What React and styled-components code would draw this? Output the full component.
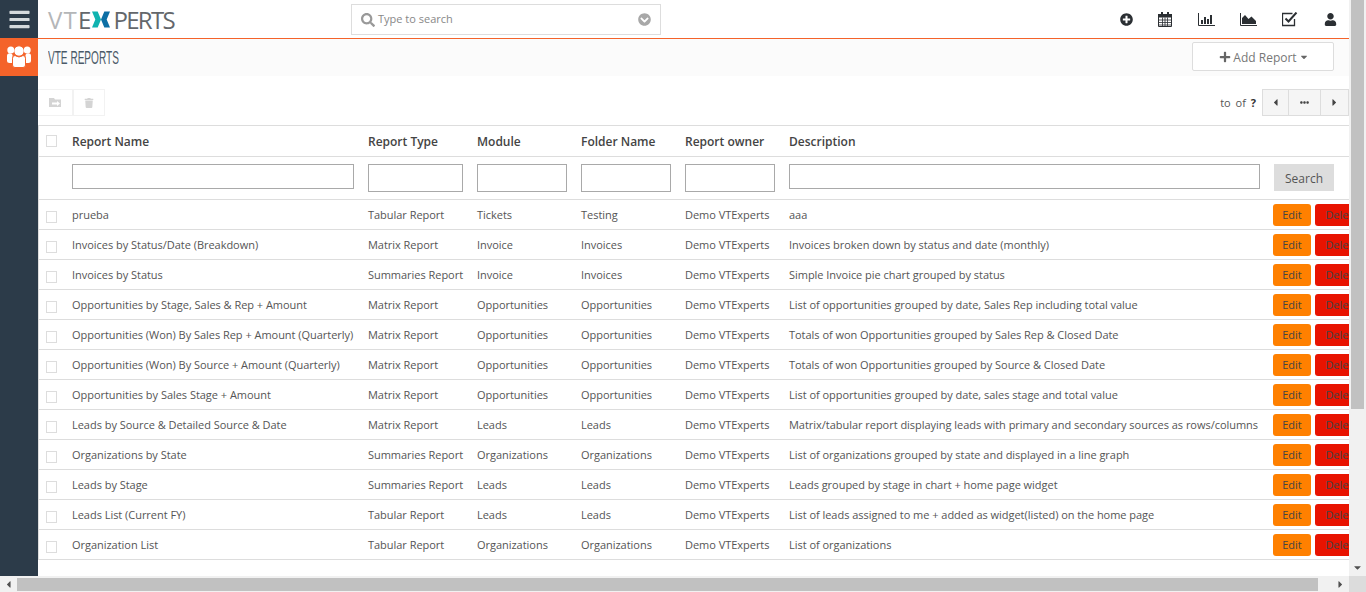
import React from "react";
import styled, { createGlobalStyle } from "styled-components";
import { FaBars, FaSearch, FaChevronCircleDown, FaPlusCircle, FaUser, FaPlus, FaCaretDown, FaCaretLeft, FaCaretRight, FaEllipsisH, FaTrash } from "react-icons/fa";

const Global = createGlobalStyle`
  * { box-sizing: border-box; }
  html, body { margin: 0; padding: 0; height: 100%; overflow: hidden; background: #fff; }
  body { font-family: "Open Sans", "Liberation Sans", sans-serif; font-size: 11px; color: #555; }
`;

const Shell = styled.div`
  display: grid;
  grid-template-columns: 1349px 17px;
  grid-template-rows: 576px 16px;
  width: 1366px;
  height: 592px;
`;
const Viewport = styled.div`
  display: flex;
  overflow: hidden;
  min-width: 0;
`;
const Sidebar = styled.nav`
  flex: 0 0 38px;
  background: #2c3b49;
  display: flex;
  flex-direction: column;
`;
const MenuButton = styled.div`
  height: 38px;
  display: flex;
  align-items: center;
  justify-content: center;
  color: #d5dadd;
  font-size: 23px;
`;
const ModuleTile = styled.div`
  height: 38px;
  background: #f4632a;
  display: flex;
  align-items: center;
  justify-content: center;
  padding-bottom: 1px;
`;
const Main = styled.main`
  flex: 1;
  min-width: 0;
  display: flex;
  flex-direction: column;
`;
const TopBar = styled.header`
  height: 39px;
  flex: none;
  border-bottom: 1px solid #f4632a;
  display: flex;
  align-items: flex-start;
  padding-left: 10px;
`;
const Logo = styled.div`
  width: 303px;
  height: 38px;
  display: flex;
  align-items: center;
  font-family: "Open Sans", sans-serif;
  font-weight: 400;
  font-size: 24px;
  letter-spacing: -1.7px;
  color: #63676b;
  svg { margin: 0 3px 0 0; }
`;
const LogoLead = styled.span`
  letter-spacing: 1.2px;
`;
const LogoFade = styled.span`
  color: #b4b6b8;
`;
const SearchBox = styled.div`
  width: 310px;
  height: 31px;
  margin-top: 4px;
  border: 1px solid #ddd;
  display: flex;
  align-items: center;
  padding: 0 9px;
  color: #999;
  font-size: 14px;
`;
const SearchText = styled.span`
  flex: 1;
  margin: -2px 0 0 3px;
  font-size: 11px;
  color: #888;
`;
const TopIcons = styled.div`
  margin-left: auto;
  display: flex;
  align-items: center;
  height: 38px;
  padding-top: 1px;
  color: #2b2f33;
  font-size: 14px;
`;
const TopIcon = styled.span`
  width: ${(p) => p.$w}px;
  display: flex;
  justify-content: center;
`;
const ModuleHeader = styled.div`
  height: 37px;
  flex: none;
  background: #fbfbfb;
  display: flex;
  align-items: center;
  justify-content: space-between;
  padding: 0 15px 2px 10px;
`;
const ModuleTitle = styled.h1`
  margin: 2px 0 0;
  font-family: "Liberation Sans", sans-serif;
  font-weight: 400;
  font-size: 19px;
  color: #4b5a68;
  display: inline-block;
  white-space: nowrap;
  transform-origin: left center;
  transform: scaleX(0.53);
`;
const AddButton = styled.button`
  width: 142px;
  height: 29px;
  background: #fff;
  border: 1px solid #ddd;
  border-radius: 2px;
  display: flex;
  align-items: center;
  justify-content: center;
  gap: 2px;
  color: #777;
  font: 400 12px "Open Sans", sans-serif;
  padding: 1px 0 0 2px;
  svg { color: #666; }
`;
const Toolbar = styled.div`
  height: 49px;
  flex: none;
  display: flex;
  align-items: flex-start;
  justify-content: space-between;
  padding-top: 13px;
`;
const BulkGroup = styled.div`
  display: flex;
`;
const BulkButton = styled.div`
  width: ${(p) => p.$w}px;
  height: 27px;
  border: 1px solid #f2f2f2;
  border-left-width: ${(p) => (p.$first ? 0 : 1)}px;
  display: flex;
  align-items: center;
  justify-content: center;
  color: #d4d4d4;
  font-size: 11px;
`;
const Pager = styled.div`
  display: flex;
  align-items: center;
`;
const PagerText = styled.span`
  margin-right: 6px;
  word-spacing: 2px;
  b { color: #333; font-weight: 700; }
`;
const PagerButton = styled.div`
  width: ${(p) => p.$w}px;
  height: 27px;
  background: #f5f5f5;
  border: 1px solid #ddd;
  border-left-width: ${(p) => (p.$first ? 1 : 0)}px;
  display: flex;
  align-items: center;
  justify-content: center;
  color: #444;
  font-size: ${(p) => p.$size || 11}px;
`;
const Table = styled.table`
  table-layout: fixed;
  width: 1345px;
  border-collapse: separate;
  border-spacing: 0;
  border-top: 1px solid #ddd;
  border-left: 1px solid #ddd;
  margin-right: -40px;
`;
const Head = styled.th`
  height: 31px;
  padding: 0 0 0 4px;
  text-align: left;
  font-size: 12px;
  font-weight: 600;
  color: #444;
  border-bottom: 1px solid #ddd;
`;
const FilterCell = styled.td`
  height: 43px;
  padding: 7px 0 0 4px;
  vertical-align: top;
  border-bottom: 1px solid #ddd;
`;
const Cell = styled.td`
  height: 30px;
  padding: 0 0 0 4px;
  white-space: nowrap;
  overflow: hidden;
  color: #555;
  letter-spacing: -0.03px;
  border-bottom: 1px solid #ddd;
`;
const CheckCell = styled(Cell)`
  padding: 5px 0 0 7px;
`;
const HeadCheck = styled(Head)`
  padding: 0 0 1px 7px;
`;
const Check = styled.span`
  display: block;
  width: 11px;
  height: 12px;
  border: 1px solid #ddd;
  background: #fff;
`;
const FilterInput = styled.input`
  display: block;
  width: ${(p) => p.$w}px;
  height: ${(p) => p.$h}px;
  border: 1px solid #a9a9a9;
  background: #fff;
  padding: 0;
  outline: none;
`;
const SearchButton = styled.button`
  width: 60px;
  height: 27px;
  margin-left: 1px;
  border: 0;
  background: #ddd;
  color: #555;
  font: 400 12px "Open Sans", sans-serif;
  padding: 1px 0 0;
`;
const ActionCell = styled(Cell)`
  overflow: visible;
`;
const Actions = styled.div`
  display: flex;
  gap: 4px;
  height: 22px;
`;
const Action = styled.button`
  width: ${(p) => p.$w}px;
  flex: none;
  border: 0;
  border-radius: 3px;
  background: ${(p) => p.$bg};
  color: #444;
  font: 400 11px "Open Sans", sans-serif;
  padding: 0;
`;
const VBar = styled.div`
  background: #f1f1f1;
  display: flex;
  flex-direction: column;
  align-items: center;
`;
const VThumb = styled.div`
  width: 13px;
  height: 409px;
  background: #c1c1c1;
`;
const ArrowDown = styled.div`
  margin-top: auto;
  height: 18px;
  display: flex;
  align-items: center;
  justify-content: center;
  color: #505050;
  font-size: 11px;
`;
const HBar = styled.div`
  background: #f1f1f1;
  display: flex;
  align-items: center;
`;
const HArrow = styled.div`
  width: 17px;
  height: 16px;
  display: flex;
  align-items: center;
  justify-content: center;
  color: #505050;
  font-size: 11px;
  flex: none;
`;
const HThumb = styled.div`
  width: 1301px;
  height: 13px;
  margin-top: 1px;
  background: #c1c1c1;
`;
const HSpacer = styled.div`
  flex: 1;
`;
const Corner = styled.div`
  background: #dcdcdc;
`;

const X = () => (
  <svg width="18" height="17" viewBox="0 0 19 17">
    <path d="M0 0h6l3.500 8.500L6 17H0l3.500-8.500z" fill="#0fb3b0" />
    <path d="M19 0h-6L9.500 8.500 13 17h6l-3.500-8.500z" fill="#0c6fa5" />
  </svg>
);
const Users = () => (
  <svg width="24" height="23" viewBox="0 0 24 23" fill="#fff">
    <circle cx="12" cy="6" r="5.200" stroke="#f4632a" strokeWidth="1" />
    <circle cx="3.800" cy="5" r="3.500" />
    <circle cx="20.200" cy="5" r="3.500" />
    <circle cx="2.800" cy="11" r="2.800" />
    <circle cx="21.200" cy="11" r="2.800" />
    <path d="M0 11h5v7H2.500Q0 18 0 16zM24 11h-5v7h2.500q2.500 0 2.500-2z" />
    <path d="M5.500 13.500Q5.500 10.500 8 10.500q4 3 8 0 2.500 0 2.500 3V20q0 2.500-2.500 2.500H8Q5.500 22.500 5.500 20z" stroke="#f4632a" strokeWidth="1" />
  </svg>
);
const Calendar = () => (
  <svg width="14" height="15" viewBox="0 0 14 15">
    <path d="M.5 2.500h13v12H.5z" fill="none" stroke="#2b2f33" />
    <path d="M0 2h14v3.500H0z" fill="#2b2f33" />
    <path d="M3 0h2v3H3zM9 0h2v3H9z" fill="#2b2f33" />
    <path d="M4.500 5.500v9M7 5.500v9M9.500 5.500v9M.5 8h13M.5 10.500h13M.5 13h13" stroke="#2b2f33" strokeWidth=".8" />
  </svg>
);
const Bars = () => (
  <svg width="17" height="13" viewBox="0 0 17 13">
    <path d="M.5 0v12.500H17" fill="none" stroke="#2b2f33" />
    <path d="M3 7h2v4H3zM6 4h2v7H6zM9 6h2v5H9zM12 2h2v9h-2z" fill="#2b2f33" />
  </svg>
);
const Area = () => (
  <svg width="17" height="13" viewBox="0 0 17 13">
    <path d="M.5 0v12.500H17" fill="none" stroke="#2b2f33" />
    <path d="M2 11V5l3-3 3.500 4 3-2.500L16 8v3z" fill="#2b2f33" />
  </svg>
);
const Tick = () => (
  <svg width="16" height="15" viewBox="0 0 16 15">
    <path d="M12.500 7v6.500h-12v-12h10" fill="none" stroke="#2b2f33" strokeWidth="1.300" />
    <path d="M3.500 6.500l3 3L14.500 .5" fill="none" stroke="#2b2f33" strokeWidth="2" />
  </svg>
);
const FolderMove = () => (
  <svg width="13" height="11" viewBox="0 0 13 11">
    <path d="M0 1h5l1 1.500h6V10H0z" fill="#d4d4d4" />
    <path d="M3 5.500h5V4l3 2.500L8 9V7.500H3z" fill="#fff" />
  </svg>
);

const rows = [
  ["prueba", "Tabular Report", "Tickets", "Testing", "aaa"],
  ["Invoices by Status/Date (Breakdown)", "Matrix Report", "Invoice", "Invoices", "Invoices broken down by status and date (monthly)"],
  ["Invoices by Status", "Summaries Report", "Invoice", "Invoices", "Simple Invoice pie chart grouped by status"],
  ["Opportunities by Stage, Sales & Rep + Amount", "Matrix Report", "Opportunities", "Opportunities", "List of opportunities grouped by date, Sales Rep including total value"],
  ["Opportunities (Won) By Sales Rep + Amount (Quarterly)", "Matrix Report", "Opportunities", "Opportunities", "Totals of won Opportunities grouped by Sales Rep & Closed Date"],
  ["Opportunities (Won) By Source + Amount (Quarterly)", "Matrix Report", "Opportunities", "Opportunities", "Totals of won Opportunities grouped by Source & Closed Date"],
  ["Opportunities by Sales Stage + Amount", "Matrix Report", "Opportunities", "Opportunities", "List of opportunities grouped by date, sales stage and total value"],
  ["Leads by Source & Detailed Source & Date", "Matrix Report", "Leads", "Leads", "Matrix/tabular report displaying leads with primary and secondary sources as rows/columns"],
  ["Organizations by State", "Summaries Report", "Organizations", "Organizations", "List of organizations grouped by state and displayed in a line graph"],
  ["Leads by Stage", "Summaries Report", "Leads", "Leads", "Leads grouped by stage in chart + home page widget"],
  ["Leads List (Current FY)", "Tabular Report", "Leads", "Leads", "List of leads assigned to me + added as widget(listed) on the home page"],
  ["Organization List", "Tabular Report", "Organizations", "Organizations", "List of organizations"],
];

const cols = [29, 296, 109, 104, 104, 104, 484, 115];
const heads = ["Report Name", "Report Type", "Module", "Folder Name", "Report owner", "Description"];
const filters = [[282, 25], [95, 28], [90, 28], [90, 28], [90, 28], [471, 25]];

export default function App() {
  return (
    <>
      <Global />
      <Shell>
        <Viewport>
          <Sidebar>
            <MenuButton><FaBars /></MenuButton>
            <ModuleTile><Users /></ModuleTile>
          </Sidebar>
          <Main>
            <TopBar>
              <Logo>
                <LogoLead><LogoFade>VT</LogoFade>E</LogoLead><X />PERTS
              </Logo>
              <SearchBox>
                <FaSearch />
                <SearchText>Type to search</SearchText>
                <FaChevronCircleDown size={13} color="#a8a8a8" />
              </SearchBox>
              <TopIcons>
                <TopIcon $w={38}><FaPlusCircle size={13} /></TopIcon>
                <TopIcon $w={40}><Calendar /></TopIcon>
                <TopIcon $w={42}><Bars /></TopIcon>
                <TopIcon $w={42}><Area /></TopIcon>
                <TopIcon $w={42}><Tick /></TopIcon>
                <TopIcon $w={38}><FaUser size={13} /></TopIcon>
              </TopIcons>
            </TopBar>
            <ModuleHeader>
              <ModuleTitle>VTE REPORTS</ModuleTitle>
              <AddButton><FaPlus size={12} /> Add Report <FaCaretDown size={10} /></AddButton>
            </ModuleHeader>
            <Toolbar>
              <BulkGroup>
                <BulkButton $w={35} $first><FolderMove /></BulkButton>
                <BulkButton $w={32}><FaTrash size={10} /></BulkButton>
              </BulkGroup>
              <Pager>
                <PagerText>to of <b>?</b></PagerText>
                <PagerButton $w={27} $first><FaCaretLeft /></PagerButton>
                <PagerButton $w={32}><FaEllipsisH size={9} /></PagerButton>
                <PagerButton $w={28}><FaCaretRight /></PagerButton>
              </Pager>
            </Toolbar>
            <Table>
              <colgroup>
                {cols.map((w, i) => <col key={i} style={{ width: w }} />)}
              </colgroup>
              <thead>
                <tr>
                  <HeadCheck><Check /></HeadCheck>
                  {heads.map((h) => <Head key={h}>{h}</Head>)}
                  <Head />
                </tr>
                <tr>
                  <FilterCell />
                  {filters.map(([w, h], i) => (
                    <FilterCell key={i}><FilterInput $w={w} $h={h} /></FilterCell>
                  ))}
                  <FilterCell><SearchButton>Search</SearchButton></FilterCell>
                </tr>
              </thead>
              <tbody>
                {rows.map((r) => (
                  <tr key={r[0]}>
                    <CheckCell><Check /></CheckCell>
                    <Cell>{r[0]}</Cell>
                    <Cell>{r[1]}</Cell>
                    <Cell>{r[2]}</Cell>
                    <Cell>{r[3]}</Cell>
                    <Cell>Demo VTExperts</Cell>
                    <Cell>{r[4]}</Cell>
                    <ActionCell>
                      <Actions>
                        <Action $w={38} $bg="#ff8000">Edit</Action>
                        <Action $w={54} $bg="#e81300">Delete</Action>
                      </Actions>
                    </ActionCell>
                  </tr>
                ))}
              </tbody>
            </Table>
          </Main>
        </Viewport>
        <VBar>
          <VThumb />
          <ArrowDown><FaCaretDown /></ArrowDown>
        </VBar>
        <HBar>
          <HArrow><FaCaretLeft /></HArrow>
          <HThumb />
          <HSpacer />
          <HArrow><FaCaretRight /></HArrow>
        </HBar>
        <Corner />
      </Shell>
    </>
  );
}
